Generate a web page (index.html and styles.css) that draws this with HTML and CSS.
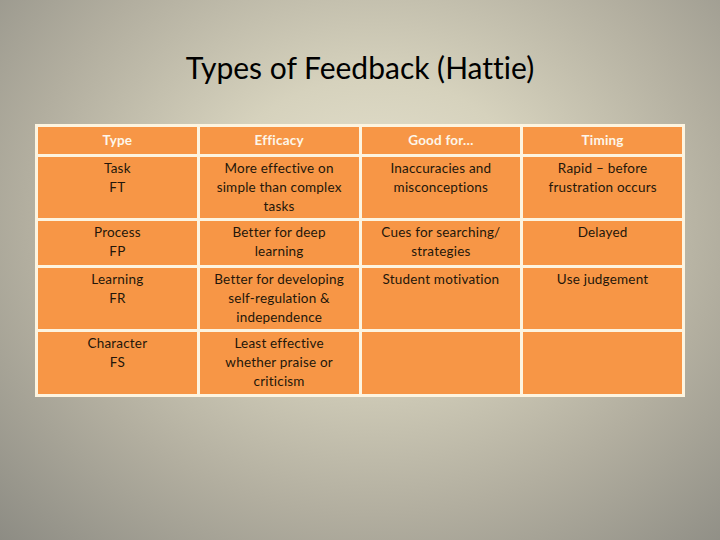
FILE: index.html
```html
<!DOCTYPE html>
<html>
<head>
<meta charset="utf-8">
<link rel="stylesheet" href="styles.css">
</head>
<body>
<div class="slide">
  <h1 class="title">Types of Feedback (Hattie)</h1>
  <table class="grid">
    <thead>
      <tr class="head"><th>Type</th><th>Efficacy</th><th>Good for…</th><th>Timing</th></tr>
    </thead>
    <tbody>
      <tr class="r1"><td>Task<br>FT</td><td>More effective on simple than complex tasks</td><td>Inaccuracies and misconceptions</td><td>Rapid – before frustration occurs</td></tr>
      <tr class="r2"><td>Process<br>FP</td><td>Better for deep learning</td><td>Cues for searching/ strategies</td><td>Delayed</td></tr>
      <tr class="r3"><td>Learning<br>FR</td><td>Better for developing self-regulation &amp; independence</td><td>Student motivation</td><td>Use judgement</td></tr>
      <tr class="r4"><td>Character<br>FS</td><td>Least effective whether praise or criticism</td><td></td><td></td></tr>
    </tbody>
  </table>
</div>
</body>
</html>
```
FILE: styles.css
```css
html, body {
  margin: 0;
  padding: 0;
}
.slide {
  width: 720px;
  height: 540px;
  box-sizing: border-box;
  padding-top: 47px;
  background: radial-gradient(ellipse 75% 85% at 52% 40%, #e6e2cf 0%, #d6d2bd 30%, #b2ae9f 65%, #8c8b83 100%);
  font-family: Lato, "Open Sans", sans-serif;
  font-variant-ligatures: none;
}
.title {
  margin: 0;
  text-align: center;
  font-weight: normal;
  font-size: 30px;
  line-height: 40px;
  color: #000;
}
.grid {
  margin: 37px 0 0 35px;
  width: 650px;
  border-collapse: collapse;
  table-layout: fixed;
  background: #f79646;
  border: 2px solid #fdf4e0;
}
.grid th, .grid td {
  border: 3px solid #fdf4e0;
  text-align: center;
  vertical-align: top;
  font-size: 13.5px;
  line-height: 19px;
  letter-spacing: 0.2px;
  color: #24160a;
  padding: 2px 8px 0;
}
.grid th {
  color: #fdf6ea;
  font-weight: bold;
  height: 27px;
  vertical-align: middle;
  padding: 0 8px;
}
.r1 td { height: 59px; }
.r2 td { height: 42px; }
.r3 td { height: 59px; }
.r4 td { height: 60px; }
```
